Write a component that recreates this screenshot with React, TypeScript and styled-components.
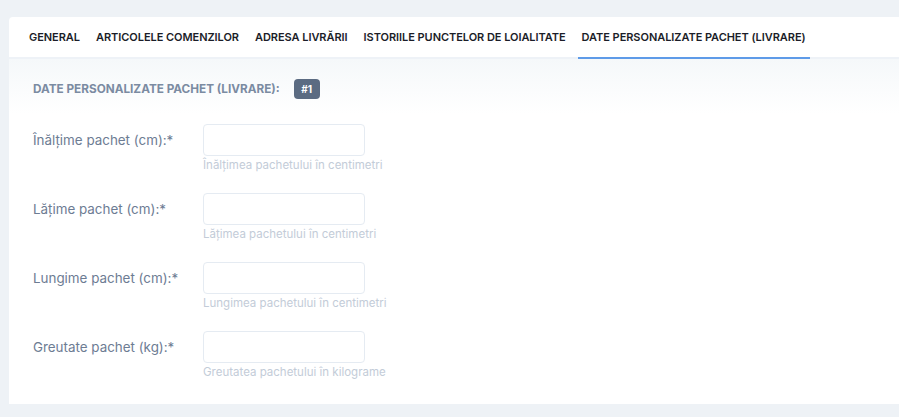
import styled, { createGlobalStyle } from "styled-components";

const Global = createGlobalStyle`
  html, body {
    margin: 0;
    padding: 0;
    background: #eef2f6;
    font-family: Inter, "Noto Sans", "Liberation Sans", sans-serif;
  }
`;

const Page = styled.div`
  padding: 17px 0 14px 9px;
  overflow: hidden;
`;

const Card = styled.div`
  width: 960px;
  background: #fff;
  border-radius: 4px 0 0 4px;
`;

const TabBar = styled.div`
  display: flex;
  gap: 8px;
  height: 40px;
  padding-left: 16px;
  border-bottom: 2px solid #eef2f7;
`;

const Tab = styled.div<{ $active?: boolean }>`
  display: flex;
  align-items: center;
  padding: 0 4px;
  margin-bottom: -2px;
  font-size: 11px;
  font-weight: 600;
  color: #1b1d28;
  letter-spacing: -0.05px;
  border-bottom: 2px solid ${({ $active }) => ($active ? "#5e9be8" : "transparent")};
`;

const Body = styled.div`
  padding: 20px 24px 24px;
  background: linear-gradient(180deg, #f5f8fa 0px, #ffffff 55px);
`;

const SectionHead = styled.div`
  display: flex;
  align-items: center;
  gap: 14px;
  margin-bottom: 25px;
`;

const SectionTitle = styled.span`
  font-size: 11.75px;
  font-weight: 700;
  color: #7b8ba2;
`;

const Badge = styled.span`
  display: inline-flex;
  align-items: center;
  justify-content: center;
  width: 26px;
  height: 20px;
  border-radius: 4px;
  background: #5b6b82;
  color: #fff;
  font-size: 10px;
  font-weight: 700;
`;

const Fields = styled.div`
  display: flex;
  flex-direction: column;
  gap: 20px;
`;

const Row = styled.div`
  display: grid;
  grid-template-columns: 170px 162px;
  align-items: start;
`;

const Label = styled.label`
  height: 32px;
  display: flex;
  align-items: center;
  font-size: 13.4px;
  color: #6d7c93;
`;

const Control = styled.div`
  display: flex;
  flex-direction: column;
`;

const Input = styled.input`
  box-sizing: border-box;
  width: 162px;
  height: 32px;
  border: 1px solid #e5ebf2;
  border-radius: 4px;
  background: #fff;
  outline: none;
`;

const Help = styled.span`
  margin-top: 1px;
  font-size: 11.5px;
  color: #c3ccd8;
  white-space: nowrap;
  line-height: 16px;
`;

const tabs = [
  "GENERAL",
  "ARTICOLELE COMENZILOR",
  "ADRESA LIVRĂRII",
  "ISTORIILE PUNCTELOR DE LOIALITATE",
  "DATE PERSONALIZATE PACHET (LIVRARE)",
];

const fields = [
  { label: "Înălțime pachet (cm):*", help: "Înălțimea pachetului în centimetri" },
  { label: "Lățime pachet (cm):*", help: "Lățimea pachetului în centimetri" },
  { label: "Lungime pachet (cm):*", help: "Lungimea pachetului în centimetri" },
  { label: "Greutate pachet (kg):*", help: "Greutatea pachetului în kilograme" },
];

export default function App() {
  return (
    <Page>
      <Global />
      <Card>
        <TabBar>
          {tabs.map((t, i) => (
            <Tab key={t} $active={i === tabs.length - 1}>
              {t}
            </Tab>
          ))}
        </TabBar>
        <Body>
          <SectionHead>
            <SectionTitle>DATE PERSONALIZATE PACHET (LIVRARE):</SectionTitle>
            <Badge>#1</Badge>
          </SectionHead>
          <Fields>
            {fields.map((f) => (
              <Row key={f.label}>
                <Label>{f.label}</Label>
                <Control>
                  <Input type="text" />
                  <Help>{f.help}</Help>
                </Control>
              </Row>
            ))}
          </Fields>
        </Body>
      </Card>
    </Page>
  );
}
